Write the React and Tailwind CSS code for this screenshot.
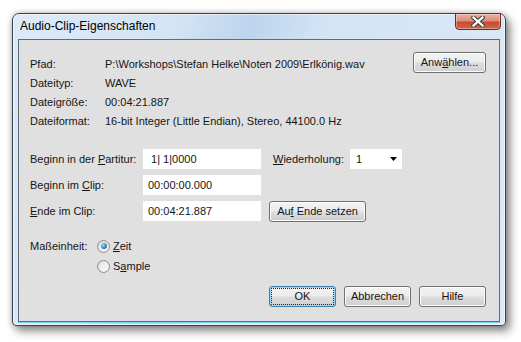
import React from "react";

const Btn = ({ children, w = "w-[67px]", focus = false }) => (
  <div
    className={`${w} h-[21px] rounded-[3px] border ${
      focus ? "border-[#3c7fb1] shadow-[inset_0_0_0_1px_#9fd5f5]" : "border-[#707070] shadow-[inset_0_0_0_1px_#fcfcfc]"
    } bg-[linear-gradient(#f3f3f3_0%,#ebebeb_48%,#dddddd_52%,#cfcfcf_100%)] flex items-center justify-center p-[2px]`}
  >
    <div
      className={`w-full h-full flex items-center justify-center ${
        focus ? "outline outline-1 outline-dotted outline-[#222]" : ""
      }`}
    >
      <span className="whitespace-pre">{children}</span>
    </div>
  </div>
);

const Radio = ({ checked, children }) => (
  <div className="flex items-center h-[20px]">
    <div className="w-[13px] h-[13px] rounded-full border border-[#8e8f8f] bg-[linear-gradient(135deg,#d2d2d2,#f6f6f6)] flex items-center justify-center">
      <div className="w-[9px] h-[9px] rounded-full bg-[linear-gradient(135deg,#e2e2e2,#fbfbfb)] flex items-center justify-center">
        {checked && (
          <div className="w-[6px] h-[6px] rounded-full bg-[radial-gradient(circle_at_35%_35%,#a8e0fb,#2a7ab8_60%,#154f86)]" />
        )}
      </div>
    </div>
    <span className="ml-[3px]">{children}</span>
  </div>
);

const Field = ({ children }) => (
  <div className="w-[118px] h-[20px] bg-white flex items-center pl-[5px]">{children}</div>
);

export default function App() {
  return (
    <div className="w-[521px] h-[342px] bg-white pl-[12px] pt-[13px] font-['Liberation_Sans',Arial,sans-serif] text-[11px] leading-[13px] text-[#151515]">
      <div className="relative w-[494px] h-[313px] rounded-t-[7px] rounded-b-[4px] border border-[#38434f] bg-[linear-gradient(110deg,#dceaf8_0%,#d3e4f5_28%,#bcd4ed_40%,#d3e4f5_52%,#dbeaf8_100%)] shadow-[4px_5px_10px_rgba(0,0,0,0.45),0_0_6px_rgba(0,0,0,0.25),inset_0_0_0_1px_rgba(255,255,255,0.55)]">
        {/* Title bar */}
        <div className="h-[25px] flex items-center pl-[7px] text-[12px] text-black">
          Audio-Clip-Eigenschaften
        </div>
        <div className="absolute right-[4px] -top-[1px] w-[46px] h-[17px] rounded-b-[4px] border border-[#6e2a1f] bg-[linear-gradient(#eab0a2_0%,#df8d79_45%,#c84a30_55%,#d0664a_100%)] shadow-[inset_0_0_0_1px_rgba(255,255,255,0.35)] flex items-center justify-center">
          <svg width="14" height="11" viewBox="0 0 14 11">
            <path d="M2.5 1.5 L11.5 9.5 M11.5 1.5 L2.5 9.5" stroke="#4b4b4b" strokeWidth="4.5" strokeLinecap="square" />
            <path d="M2.5 1.5 L11.5 9.5 M11.5 1.5 L2.5 9.5" stroke="#ffffff" strokeWidth="2.2" strokeLinecap="square" />
          </svg>
        </div>

        {/* Client area */}
        <div className="mx-[5px] h-[283px] border border-[#5f6b78] bg-[#e0e0e0] pt-[15px] pl-[11px] pr-[13px] shadow-[0_1px_0_#7fd3f7]">
          {/* Info rows */}
          <div className="flex items-center h-[19px]">
            <span className="w-[75px]">Pfad:</span>
            <span>P:\Workshops\Stefan Helke\Noten 2009\Erlkönig.wav</span>
            <div className="ml-auto mb-[4px]">
              <Btn w="w-[73px]">
                Anw<u>ä</u>hlen...
              </Btn>
            </div>
          </div>
          <div className="flex items-center h-[19px]">
            <span className="w-[75px]">Dateityp:</span>
            <span>WAVE</span>
          </div>
          <div className="flex items-center h-[19px]">
            <span className="w-[75px]">Dateigröße:</span>
            <span>00:04:21.887</span>
          </div>
          <div className="flex items-center h-[19px]">
            <span className="w-[75px]">Dateiformat:</span>
            <span>16-bit Integer (Little Endian), Stereo, 44100.0 Hz</span>
          </div>

          {/* Position fields */}
          <div className="mt-[18px] flex flex-col gap-[6px]">
            <div className="flex items-center h-[20px]">
              <span className="w-[113px]">
                Beginn in der <u>P</u>artitur:
              </span>
              <Field>
                <span className="whitespace-pre"> 1| 1|0000</span>
              </Field>
              <span className="ml-[12px] w-[77px]">
                <u>W</u>iederholung:
              </span>
              <div className="w-[52px] h-[20px] bg-white flex items-center pl-[6px] pr-[5px] justify-between">
                <span>1</span>
                <svg width="7" height="4" viewBox="0 0 7 4">
                  <path d="M0 0 H7 L3.5 4 Z" fill="#000" />
                </svg>
              </div>
            </div>
            <div className="flex items-center h-[20px]">
              <span className="w-[113px]">
                Beginn im <u>C</u>lip:
              </span>
              <Field>00:00:00.000</Field>
            </div>
            <div className="flex items-center h-[20px]">
              <span className="w-[113px]">
                <u>E</u>nde im Clip:
              </span>
              <Field>00:04:21.887</Field>
              <div className="ml-[8px]">
                <Btn w="w-[97px]">
                  Au<u>f</u> Ende setzen
                </Btn>
              </div>
            </div>
          </div>

          {/* Unit */}
          <div className="mt-[15px] flex">
            <span className="w-[67px] h-[20px] flex items-center">Maßeinheit:</span>
            <div className="flex flex-col">
              <Radio checked>
                <u>Z</u>eit
              </Radio>
              <Radio>
                S<u>a</u>mple
              </Radio>
            </div>
          </div>

          {/* Buttons */}
          <div className="mt-[10px] flex justify-end gap-[8px]">
            <Btn focus>OK</Btn>
            <Btn>Abbrechen</Btn>
            <Btn>Hilfe</Btn>
          </div>
        </div>
      </div>
    </div>
  );
}
